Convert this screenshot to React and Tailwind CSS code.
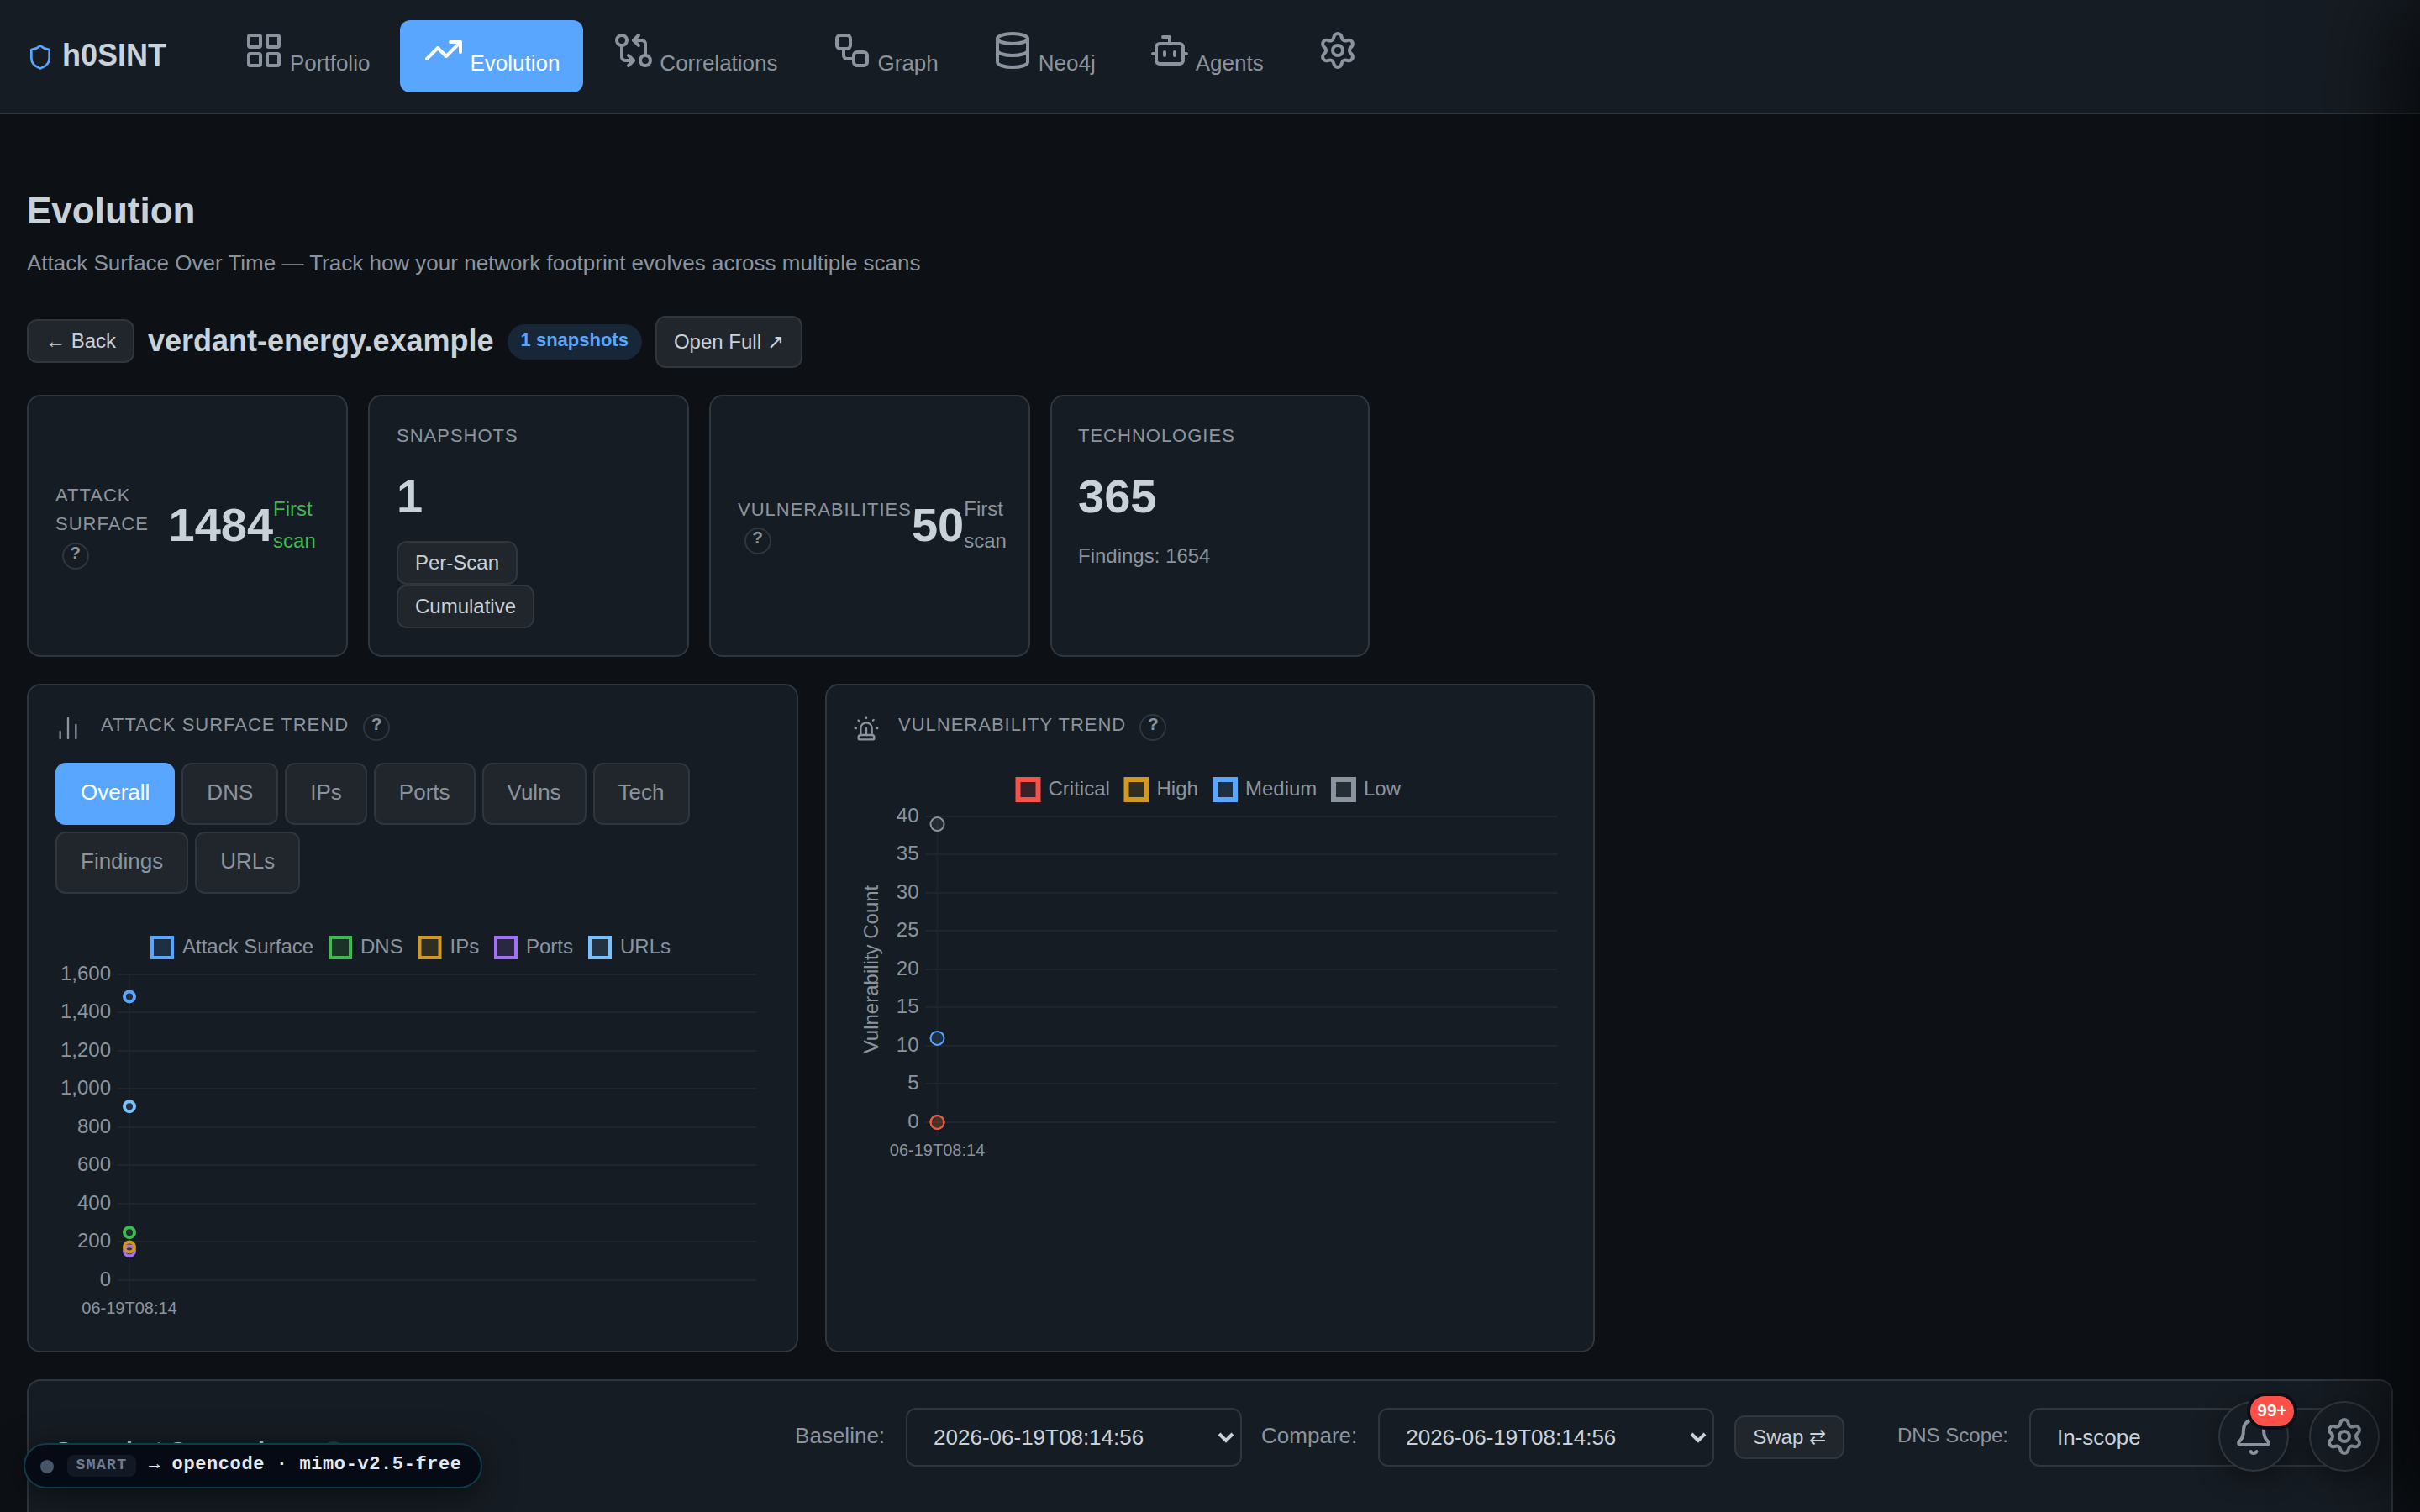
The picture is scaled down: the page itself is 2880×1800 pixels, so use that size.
import {
  Bell,
  Bot,
  ChartNoAxesColumn,
  Database,
  GitCompareArrows,
  LayoutGrid,
  Settings,
  Shield,
  Siren,
  TrendingUp,
  Workflow,
} from 'lucide-react'

const NAV = [
  { label: 'Portfolio',    icon: LayoutGrid },
  { label: 'Evolution',    icon: TrendingUp, active: true },
  { label: 'Correlations', icon: GitCompareArrows },
  { label: 'Graph',        icon: Workflow },
  { label: 'Neo4j',        icon: Database },
  { label: 'Agents',       icon: Bot },
  { label: '',             icon: Settings },
]

const TABS = ['Overall', 'DNS', 'IPs', 'Ports', 'Vulns', 'Tech', 'Findings', 'URLs']

const SURFACE_SERIES = [
  { name: 'Attack Surface', color: '#58a6ff', value: 1484, x: 115 },
  { name: 'DNS',            color: '#3fb950', value: 250,  x: 327 },
  { name: 'IPs',            color: '#d29922', value: 174,  x: 433.5 },
  { name: 'Ports',          color: '#a371f7', value: 153,  x: 524 },
  { name: 'URLs',           color: '#79c0ff', value: 909,  x: 636 },
]

const VULN_SERIES = [
  { name: 'Critical', color: '#f85149', value: 0,  x: 195.5 },
  { name: 'High',     color: '#d29922', value: 0,  x: 324.5 },
  { name: 'Medium',   color: '#58a6ff', value: 11, x: 430 },
  { name: 'Low',      color: '#8b949e', value: 39, x: 571 },
]

const BTN = 'rounded-xl border-2 border-[#30363d] bg-[#21262d] px-5 pb-px text-2xl text-[#c9d1d9]'
const CARD = 'rounded-2xl border-2 border-[#30363d] bg-[#161c23]'
const LABEL = 'text-[22px] tracking-[1px] uppercase text-[#8b949e]'

function Help({ className = '' }) {
  return (
    <span
      className={`flex size-8 shrink-0 items-center justify-center rounded-full border-2 border-[#30363d] pb-[7px] text-[20.8px] leading-none font-bold text-[#8b949e] ${className}`}
    >
      ?
    </span>
  )
}

function Chart({ series, left, right, top, max, step, point, stroke, legendStroke, legendY, title, className }) {
  const bottom = top + 364
  const y = (v) => bottom - (v / max) * 364
  const ticks = []
  for (let v = 0; v <= max; v += step) ticks.push(v)
  const px = left + 14

  return (
    <svg className={className} fill="#8b949e" fontFamily="Liberation Sans, Arial, sans-serif" fontSize="24">
      {/* legend */}
      {series.map((s) => (
        <g key={s.name}>
          <rect x={s.x} y={legendY} width="24" height="24" fill={s.color} fillOpacity="0.14" stroke={s.color} strokeWidth={legendStroke} />
          <text x={s.x + 36} y={legendY + 19}>{s.name}</text>
        </g>
      ))}

      {/* grid + axis labels */}
      {ticks.map((v) => (
        <g key={v}>
          <rect x={left} y={Math.floor(y(v)) - 1} width={right - left} height="2" fill="#21262d" />
          <text x={left - 8} y={Math.floor(y(v)) + 7} textAnchor="end">{v.toLocaleString('en-US')}</text>
        </g>
      ))}
      <rect x={px - 1} y={top} width="2" height="380" fill="#21262d" fillOpacity="0.7" />
      <text x={px} y={bottom + 40} textAnchor="middle" fontSize="20">06-19T08:14</text>
      {title && (
        <text transform={`translate(29 ${top + 182}) rotate(-90)`} textAnchor="middle">{title}</text>
      )}

      {/* first series is painted on top */}
      {[...series].reverse().map((s) => (
        <circle key={s.name} cx={px} cy={y(s.value)} r={point} fill={s.color} fillOpacity="0.12" stroke={s.color} strokeWidth={stroke} />
      ))}
    </svg>
  )
}

function Select({ value, arrow = true }) {
  return (
    <div className="flex h-[70px] w-[400px] shrink-0 items-center justify-between rounded-xl border-2 border-[#30363d] bg-[#161c23] pr-[7px] pl-[31px] text-[26px] text-[#c9d1d9]">
      {value}
      {arrow && (
        <svg className="size-5" viewBox="0 0 20 20" fill="none" stroke="#c9d1d9" strokeWidth="4">
          <path d="M2 6l8 8 8-8" />
        </svg>
      )}
    </div>
  )
}

export default function App() {
  return (
    <div className="relative h-[1800px] w-full overflow-hidden bg-[#0d1116] font-['Liberation_Sans',Arial,sans-serif] text-[#c9d1d9]">
      {/* Top navigation */}
      <nav className="flex h-[136px] items-start border-b-2 border-[#30363d] bg-[#161c23] pt-6 pl-8">
        <div className="flex h-[88px] w-[230px] items-center gap-[10px]">
          <Shield size={32} className="text-[#58a6ff]" />
          <span className="pb-1 text-[36px] leading-none font-bold">h0SINT</span>
        </div>
        <div className="flex gap-2">
          {NAV.map(({ label, icon: Icon, active }) => (
            <a
              key={label}
              className={`flex h-[86px] items-baseline gap-[7px] rounded-xl px-7 pt-3 text-[26px] leading-none ${
                active ? 'bg-[#58a6ff] text-white' : 'text-[#8b949e]'
              }`}
            >
              <Icon size={48} />
              {label}
            </a>
          ))}
        </div>
      </nav>

      <main className="px-8 pt-[85px]">
        <h1 className="text-[44px] leading-[60px] font-bold">Evolution</h1>
        <p className="mt-3 text-[26px] leading-10 text-[#8b949e]">
          Attack Surface Over Time — Track how your network footprint evolves across multiple scans
        </p>

        {/* Target header */}
        <div className="mt-[43px] flex h-[62px] items-center gap-4">
          <button className={`${BTN} mb-0.5 h-[52px]`}>← Back</button>
          <h2 className="pb-[3px] text-[36px] leading-none font-bold">verdant-energy.example</h2>
          <span className="flex h-[42px] items-center rounded-full bg-[#58a6ff]/15 px-4 pb-[5px] text-[22px] font-bold text-[#58a6ff]">
            1 snapshots
          </span>
          <a className={`${BTN} flex h-[62px] items-center`}>Open Full ↗</a>
        </div>

        {/* Stat cards */}
        <div className="mt-8 grid h-[312px] grid-cols-[382px_382px_382px_380px] gap-6">
          <div className={`${CARD} flex items-center px-8 pb-[2px]`}>
            <div className={`${LABEL} w-[134.5px] shrink-0 leading-[34px]`}>
              Attack Surface
              <Help className="mt-[5px] ml-2" />
            </div>
            <span className="text-[56px] leading-none font-bold">1484</span>
            <span className="text-2xl leading-[38.4px] text-[#3fb950]">First scan</span>
          </div>

          <div className={`${CARD} flex flex-col items-start p-8`}>
            <div className={`${LABEL} leading-[30px]`}>Snapshots</div>
            <div className="mt-[29px] text-[56px] leading-none font-bold">1</div>
            <button className={`${BTN} mt-[25px] h-[52px]`}>Per-Scan</button>
            <button className={`${BTN} h-[52px]`}>Cumulative</button>
          </div>

          <div className={`${CARD} flex items-center px-8 pb-[2px]`}>
            <div className={`${LABEL} shrink-0 leading-[34.4px]`}>
              Vulnerabilities
              <Help className="mt-1 ml-2" />
            </div>
            <span className="text-[56px] leading-none font-bold">50</span>
            <span className="w-14 shrink-0 text-2xl leading-[38.4px] text-[#8b949e]">First scan</span>
          </div>

          <div className={`${CARD} p-8 pl-[31px]`}>
            <div className={`${LABEL} leading-[30px]`}>Technologies</div>
            <div className="mt-[29px] text-[56px] leading-none font-bold">365</div>
            <div className="mt-6 text-2xl leading-[38.4px] text-[#8b949e]">Findings: 1654</div>
          </div>
        </div>

        {/* Charts */}
        <div className="mt-8 grid h-[796px] grid-cols-[918px_916px] gap-8">
          <section className={`${CARD} px-8 pt-8`}>
            <div className="flex h-[60px] items-start">
              <ChartNoAxesColumn size={32} strokeWidth={1.75} className="mt-[3px] mr-[23px] -ml-px text-[#8b949e]" />
              <h3 className={`${LABEL} leading-[30px]`}>Attack Surface Trend</h3>
              <Help className="mt-0.5 ml-[17px]" />
            </div>
            <div className="flex w-[780px] flex-wrap gap-2">
              {TABS.map((tab) => (
                <button
                  key={tab}
                  className={`h-[74px] rounded-xl border-2 px-7 pb-1 text-[26px] ${
                    tab === 'Overall'
                      ? 'border-[#58a6ff] bg-[#58a6ff] text-white'
                      : 'border-[#30363d] bg-[#21262d] text-[#8b949e]'
                  }`}
                >
                  {tab}
                </button>
              ))}
            </div>
            <Chart
              className="mt-9 h-[480px] w-full"
              series={SURFACE_SERIES}
              left={74}
              right={834}
              top={60}
              max={1600}
              step={200}
              point={6}
              stroke={4}
              legendStroke={4}
              legendY={16}
            />
          </section>

          <section className={`${CARD} px-8 pt-8`}>
            <div className="flex h-[60px] items-start">
              <Siren size={32} strokeWidth={1.75} className="mt-[3px] mr-[22px] -ml-px text-[#8b949e]" />
              <h3 className={`${LABEL} leading-[30px]`}>Vulnerability Trend</h3>
              <Help className="mt-0.5 ml-4" />
            </div>
            <Chart
              className="h-[480px] w-full"
              series={VULN_SERIES}
              left={85.5}
              right={837}
              top={64}
              max={40}
              step={5}
              point={8}
              stroke={2}
              legendStroke={6}
              legendY={20}
              title="Vulnerability Count"
            />
          </section>
        </div>

        {/* Snapshot comparison */}
        <section className={`${CARD} mt-8 flex h-[400px] items-start justify-between px-8 pt-8`}>
          <div className="flex items-start pt-[34px]">
            <h3 className="text-[28px] leading-[34px] font-bold">Snapshot Comparison</h3>
            <Help className="mt-[6px] ml-4" />
          </div>
          <div className="-mr-px flex h-[70px] items-center text-[26px] text-[#8b949e]">
            <span className="mr-[25px] pb-1">Baseline:</span>
            <Select value="2026-06-19T08:14:56" />
            <span className="mr-[25px] ml-[23px] pb-1">Compare:</span>
            <Select value="2026-06-19T08:14:56" />
            <button className={`${BTN} ml-6 h-[52px]`}>Swap ⇄</button>
            <span className="mr-[25px] ml-[63px] pb-1 text-2xl">DNS Scope:</span>
            <Select value="In-scope" arrow={false} />
          </div>
        </section>
      </main>

      {/* Model indicator */}
      <div className="absolute top-[1718px] left-[28px] flex h-[54px] w-[546px] items-center rounded-full border-2 border-[#0d3d4a] bg-[#050a14] pl-[18px] font-['Liberation_Mono',monospace] text-[#e2e8f0] shadow-[0_8px_40px_rgba(0,0,0,0.5)]">
        <span className="mt-[2px] size-4 rounded-full bg-[#475569]" />
        <span className="ml-4 flex h-[26px] w-[82px] items-center justify-center rounded-lg bg-[#94a3b8]/10 pb-0.5 text-[18px] font-bold tracking-[1.4px] text-[#6e7d92]">
          SMART
        </span>
        <span className="ml-[15px] pb-[3px] text-[22px] font-bold whitespace-pre tracking-[0.6px]">
          → opencode · mimo-v2.5-free
        </span>
      </div>

      {/* Floating actions */}
      <div className="absolute top-[1668px] right-12 flex gap-6 text-[#8b949e]">
        <button className="relative flex size-[84px] items-center justify-center rounded-full border-2 border-[#30363d] bg-[#161c23] shadow-[0_8px_32px_rgba(0,0,0,0.4)]">
          <Bell size={48} />
          <span className="absolute -top-3 -right-3 flex h-11 w-[60px] items-center justify-center rounded-full border-4 border-[#0d1117] bg-[#ff5149] pb-[2px] text-[20.8px] leading-none font-bold text-white">
            99+
          </span>
        </button>
        <button className="flex size-[84px] items-center justify-center rounded-full border-2 border-[#30363d] bg-[#161c23] shadow-[0_8px_32px_rgba(0,0,0,0.4)]">
          <Settings size={48} />
        </button>
      </div>

      {/* Collapsed drawer past the right edge, only its shadow reaches the page */}
      <div className="pointer-events-none absolute top-0 left-full h-full w-[800px] shadow-[-20px_0_110px_rgba(0,0,0,0.8)]" />
    </div>
  )
}
